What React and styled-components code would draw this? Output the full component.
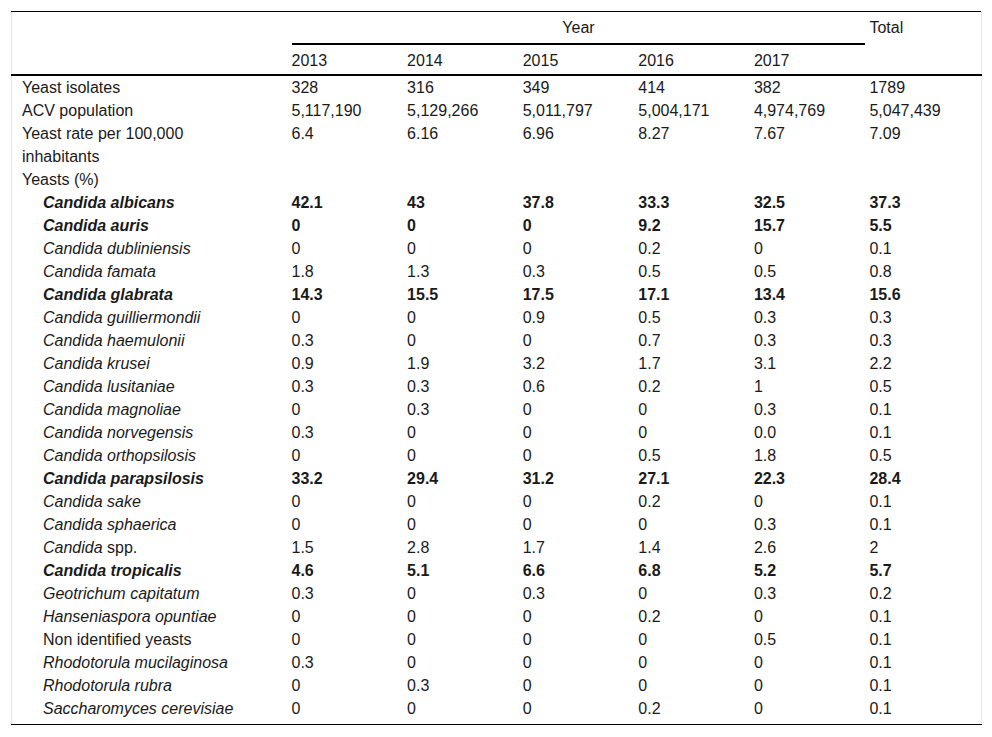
import React from "react";
import styled, { createGlobalStyle } from "styled-components";

const years = ["2013", "2014", "2015", "2016", "2017"];

const summary = [
  { label: "Yeast isolates", values: ["328", "316", "349", "414", "382", "1789"] },
  { label: "ACV population", values: ["5,117,190", "5,129,266", "5,011,797", "5,004,171", "4,974,769", "5,047,439"] },
  { label: "Yeast rate per 100,000 inhabitants", values: ["6.4", "6.16", "6.96", "8.27", "7.67", "7.09"] },
  { label: "Yeasts (%)", values: ["", "", "", "", "", ""] },
];

const species = [
  { name: "Candida albicans", bold: true, values: ["42.1", "43", "37.8", "33.3", "32.5", "37.3"] },
  { name: "Candida auris", bold: true, values: ["0", "0", "0", "9.2", "15.7", "5.5"] },
  { name: "Candida dubliniensis", values: ["0", "0", "0", "0.2", "0", "0.1"] },
  { name: "Candida famata", values: ["1.8", "1.3", "0.3", "0.5", "0.5", "0.8"] },
  { name: "Candida glabrata", bold: true, values: ["14.3", "15.5", "17.5", "17.1", "13.4", "15.6"] },
  { name: "Candida guilliermondii", values: ["0", "0", "0.9", "0.5", "0.3", "0.3"] },
  { name: "Candida haemulonii", values: ["0.3", "0", "0", "0.7", "0.3", "0.3"] },
  { name: "Candida krusei", values: ["0.9", "1.9", "3.2", "1.7", "3.1", "2.2"] },
  { name: "Candida lusitaniae", values: ["0.3", "0.3", "0.6", "0.2", "1", "0.5"] },
  { name: "Candida magnoliae", values: ["0", "0.3", "0", "0", "0.3", "0.1"] },
  { name: "Candida norvegensis", values: ["0.3", "0", "0", "0", "0.0", "0.1"] },
  { name: "Candida orthopsilosis", values: ["0", "0", "0", "0.5", "1.8", "0.5"] },
  { name: "Candida parapsilosis", bold: true, values: ["33.2", "29.4", "31.2", "27.1", "22.3", "28.4"] },
  { name: "Candida sake", values: ["0", "0", "0", "0.2", "0", "0.1"] },
  { name: "Candida sphaerica", values: ["0", "0", "0", "0", "0.3", "0.1"] },
  { name: "Candida", suffix: " spp.", values: ["1.5", "2.8", "1.7", "1.4", "2.6", "2"] },
  { name: "Candida tropicalis", bold: true, values: ["4.6", "5.1", "6.6", "6.8", "5.2", "5.7"] },
  { name: "Geotrichum capitatum", values: ["0.3", "0", "0.3", "0", "0.3", "0.2"] },
  { name: "Hanseniaspora opuntiae", values: ["0", "0", "0", "0.2", "0", "0.1"] },
  { name: "Non identified yeasts", plain: true, values: ["0", "0", "0", "0", "0.5", "0.1"] },
  { name: "Rhodotorula mucilaginosa", values: ["0.3", "0", "0", "0", "0", "0.1"] },
  { name: "Rhodotorula rubra", values: ["0", "0.3", "0", "0", "0", "0.1"] },
  { name: "Saccharomyces cerevisiae", values: ["0", "0", "0", "0.2", "0", "0.1"] },
];

function App() {
  return (
    <>
      <GlobalStyle />
      <Page>
        <Table>
          <colgroup>
            <col style={{ width: 280 }} />
            {years.map((y) => (
              <col key={y} style={{ width: 115.6 }} />
            ))}
            <col />
          </colgroup>
          <thead>
            <tr>
              <HeadCell rowSpan={2} />
              <YearCell colSpan={5}>
                <YearRule>Year</YearRule>
              </YearCell>
              <HeadCell rowSpan={2}>Total</HeadCell>
            </tr>
            <tr>
              {years.map((y) => (
                <HeadCell key={y}>{y}</HeadCell>
              ))}
            </tr>
          </thead>
          <tbody>
            {summary.map((row) => (
              <Row key={row.label}>
                <Label>
                  <LabelText>{row.label}</LabelText>
                </Label>
                {row.values.map((v, i) => (
                  <Cell key={i}>{v}</Cell>
                ))}
              </Row>
            ))}
            {species.map((row) => (
              <Row key={row.name + (row.suffix || "")}>
                <Label $indent $italic={!row.plain} $bold={row.bold}>
                  <LabelText>
                    {row.name}
                    {row.suffix && <Upright>{row.suffix}</Upright>}
                  </LabelText>
                </Label>
                {row.values.map((v, i) => (
                  <Cell key={i} $bold={row.bold}>{v}</Cell>
                ))}
              </Row>
            ))}
          </tbody>
        </Table>
      </Page>
    </>
  );
}

const GlobalStyle = createGlobalStyle`
  body {
    margin: 0;
    background: #fff;
    color: #1a1a1a;
    font-family: "Liberation Sans", Arial, sans-serif;
  }
`;

const Page = styled.div`
  padding: 11px 10px 0 11px;
`;

const Table = styled.table`
  width: 971px;
  table-layout: fixed;
  border-collapse: collapse;
  font-size: 16px;
  line-height: 23px;
  border-top: 1px solid #000;
  border-bottom: 1px solid #000;
  border-left: 1px solid #e6e6e6;
  border-right: 1px solid #e6e6e6;
`;

const HeadCell = styled.th`
  font-weight: normal;
  text-align: left;
  vertical-align: top;
  padding: 4px 0 2px 0;
  border-bottom: 2px solid #000;
`;

const YearCell = styled.th`
  font-weight: normal;
  padding: 0;
  vertical-align: top;
`;

const YearRule = styled.div`
  margin-right: 4px;
  padding: 4px 0 4px;
  text-align: center;
  border-bottom: 2px solid #000;
`;

const Row = styled.tr`
  &:last-child td {
    padding-bottom: 4px;
  }
`;

const Label = styled.td`
  padding: 0 4px 0 ${(p) => (p.$indent ? "31px" : "10px")};
  vertical-align: top;
  font-style: ${(p) => (p.$italic ? "italic" : "normal")};
  font-weight: ${(p) => (p.$bold ? "bold" : "normal")};
`;

const LabelText = styled.div`
  max-width: 210px;
`;

const Upright = styled.span`
  font-style: normal;
`;

const Cell = styled.td`
  padding: 0 4px 0 0;
  vertical-align: top;
  font-weight: ${(p) => (p.$bold ? "bold" : "normal")};
`;

export default App;
